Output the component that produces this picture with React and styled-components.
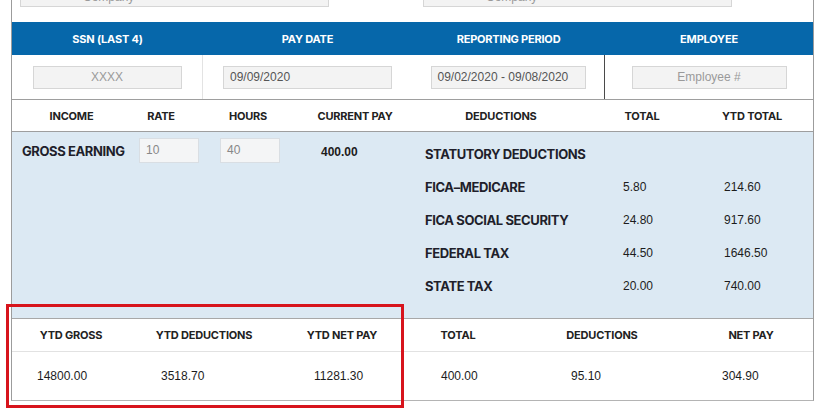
import React from "react"
import styled, { createGlobalStyle } from "styled-components"

const GlobalStyle = createGlobalStyle`
  body {
    margin: 0;
    background: #fff;
    overflow: hidden;
  }
  * {
    box-sizing: border-box;
  }
`

const Page = styled.div`
  position: relative;
  width: 824px;
  height: 412px;
  overflow: hidden;
  font-family: "Liberation Sans", Arial, sans-serif;
  color: #222;
`
const Sheet = styled.div`
  margin: -17px 0 0 11px;
  width: 803px;
  border-left: 1px solid #9c9c9c;
  border-right: 1px solid #9c9c9c;
  border-bottom: 1px solid #b4b4b4;
`
const TopRow = styled.div`
  display: grid;
  grid-template-columns: 400px 1fr;
  padding-left: 8px;
  margin-bottom: 15px;
  > div:last-child {
    margin-left: 3px;
  }
`
const Field = styled.div`
  width: ${(p) => p.$w}px;
  height: ${(p) => p.$h || 23}px;
  background: #f3f3f3;
  border: 1px solid #d6d6d6;
  font-size: 12px;
  line-height: ${(p) => (p.$h || 23) - 2}px;
  padding: 0 6px;
  color: ${(p) => (p.$placeholder ? "#9a9a9a" : "#555")};
  text-align: ${(p) => (p.$center ? "center" : "left")};
  white-space: nowrap;
  overflow: hidden;
`
const TopField = styled(Field)`
  line-height: 26px;
  padding-left: 62px;
`
const Label = styled.span`
  font-family: Inter, "Liberation Sans", sans-serif;
  font-weight: 700;
  font-size: ${(p) => p.$size || 11}px;
  letter-spacing: ${(p) => p.$ls ?? -0.2}px;
  white-space: nowrap;
`
const FourCols = styled.div`
  display: grid;
  grid-template-columns: 191px 209px 193px 1fr;
`
const BlueBar = styled(FourCols)`
  height: 33px;
  background: #0667aa;
  color: #fff;
  align-items: center;
  justify-items: center;
`
const InputRow = styled(FourCols)`
  height: 44px;
`
const InputCell = styled.div`
  display: flex;
  align-items: center;
  justify-content: center;
  border-right: ${(p) => p.$divider || "none"};
`
const Row = styled.div`
  display: flex;
  height: ${(p) => p.$h}px;
  border-top: ${(p) => p.$top || "none"};
  border-bottom: ${(p) => p.$bottom || "none"};
  background: ${(p) => p.$bg || "transparent"};
`
const Group = styled.div`
  display: grid;
  width: ${(p) => p.$w}px;
  grid-template-columns: ${(p) => p.$cols};
  padding-left: ${(p) => p.$pad || 0}px;
  align-items: center;
  justify-items: ${(p) => (p.$left ? "start" : "center")};
  color: #222;
`
const Body = styled.div`
  display: flex;
  height: 187px;
  background: #dce9f3;
  border-bottom: 1px solid #a8a8a8;
`
const EarningSide = styled.div`
  width: 400px;
  display: flex;
  align-items: flex-start;
  padding: 6px 0 0 10px;
`
const EarningLabel = styled(Label)`
  width: 117px;
  margin-top: 5px;
  color: #1f1f2b;
`
const SmallInput = styled(Field)`
  width: 60px;
  height: 25px;
  line-height: 23px;
  color: #888;
  margin-right: 21px;
  border-color: #d9dee3;
  background: #f4f5f6;
`
const Amount = styled.span`
  font-size: 12px;
  font-weight: ${(p) => (p.$bold ? 700 : 400)};
  margin: ${(p) => p.$m || 0};
  color: #1c1c1c;
`
const DeductionSide = styled.div`
  flex: 1;
  padding: 5px 0 0 13px;
`
const DeductionRow = styled.div`
  display: grid;
  grid-template-columns: 198px 101px 1fr;
  align-items: center;
  height: 33px;
  color: #1f1f2b;
`
const Highlight = styled.div`
  position: absolute;
  left: 6px;
  top: 304px;
  width: 398px;
  height: 104px;
  border: 3px solid #d7141c;
  pointer-events: none;
`

const topHeads = ["SSN (LAST 4)", "PAY DATE", "REPORTING PERIOD", "EMPLOYEE"]

const inputs = [
  { w: 149, text: "XXXX", placeholder: true, center: true, divider: "1px solid #e3e3e3" },
  { w: 169, text: "09/09/2020" },
  { w: 155, text: "09/02/2020 - 09/08/2020", divider: "1px solid #4a4a4a" },
  { w: 155, text: "Employee #", placeholder: true, center: true },
]

const deductions = [
  ["FICA\u2013MEDICARE", "5.80", "214.60"],
  ["FICA SOCIAL SECURITY", "24.80", "917.60"],
  ["FEDERAL TAX", "44.50", "1646.50"],
  ["STATE TAX", "20.00", "740.00"],
]

const App = () => {
  return (
    <Page>
      <GlobalStyle />
      <Sheet>
        <TopRow>
          <TopField $w={309} $h={24} $placeholder>Company</TopField>
          <TopField $w={309} $h={24} $placeholder>Company</TopField>
        </TopRow>

        <BlueBar>
          {topHeads.map((h) => (
            <Label key={h}>{h}</Label>
          ))}
        </BlueBar>

        <InputRow>
          {inputs.map((f) => (
            <InputCell key={f.text} $divider={f.divider}>
              <Field $w={f.w} $placeholder={f.placeholder} $center={f.center}>
                {f.text}
              </Field>
            </InputCell>
          ))}
        </InputRow>

        <Row $h={33} $top="1px solid #9e9e9e" $bottom="1px solid #9e9e9e">
          <Group $w={400} $cols="119px 60px 114px 100px">
            <Label>INCOME</Label>
            <Label>RATE</Label>
            <Label>HOURS</Label>
            <Label>CURRENT PAY</Label>
          </Group>
          <Group $w={401} $cols="178px 104px 116px">
            <Label>DEDUCTIONS</Label>
            <Label>TOTAL</Label>
            <Label>YTD TOTAL</Label>
          </Group>
        </Row>

        <Body>
          <EarningSide>
            <EarningLabel $size={13} $ls={-0.4}>GROSS EARNING</EarningLabel>
            <SmallInput>10</SmallInput>
            <SmallInput>40</SmallInput>
            <Amount $bold $m="7px 0 0 20px">400.00</Amount>
          </EarningSide>
          <DeductionSide>
            <DeductionRow>
              <Label $size={13} $ls={-0.4}>STATUTORY DEDUCTIONS</Label>
            </DeductionRow>
            {deductions.map(([name, total, ytd]) => (
              <DeductionRow key={name}>
                <Label $size={13} $ls={-0.4}>{name}</Label>
                <Amount>{total}</Amount>
                <Amount>{ytd}</Amount>
              </DeductionRow>
            ))}
          </DeductionSide>
        </Body>

        <Row $h={33} $bottom="1px solid #e2e2e2">
          <Group $w={400} $cols="118px 148px 128px">
            <Label>YTD GROSS</Label>
            <Label>YTD DEDUCTIONS</Label>
            <Label>YTD NET PAY</Label>
          </Group>
          <Group $w={401} $cols="92px 196px 102px">
            <Label>TOTAL</Label>
            <Label>DEDUCTIONS</Label>
            <Label>NET PAY</Label>
          </Group>
        </Row>

        <Row $h={48}>
          <Group $w={400} $pad={25} $left $cols="124px 153px 1fr">
            <Amount>14800.00</Amount>
            <Amount>3518.70</Amount>
            <Amount>11281.30</Amount>
          </Group>
          <Group $w={401} $pad={29} $left $cols="130px 151px 1fr">
            <Amount>400.00</Amount>
            <Amount>95.10</Amount>
            <Amount>304.90</Amount>
          </Group>
        </Row>
      </Sheet>
      <Highlight />
    </Page>
  )
}

export default App
